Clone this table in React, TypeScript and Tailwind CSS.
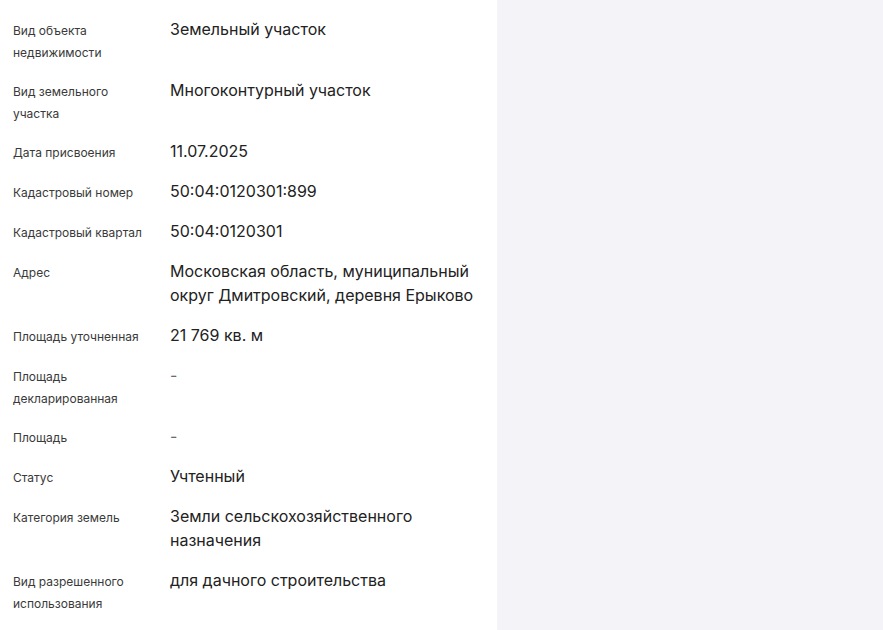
import React from "react";

type Row = { label: string; value: string; muted?: boolean };

const rows: Row[] = [
  { label: "Вид объекта недвижимости", value: "Земельный участок" },
  { label: "Вид земельного участка", value: "Многоконтурный участок" },
  { label: "Дата присвоения", value: "11.07.2025" },
  { label: "Кадастровый номер", value: "50:04:0120301:899" },
  { label: "Кадастровый квартал", value: "50:04:0120301" },
  {
    label: "Адрес",
    value: "Московская область, муниципальный округ Дмитровский, деревня Ерыково",
  },
  { label: "Площадь уточненная", value: "21 769 кв. м" },
  { label: "Площадь декларированная", value: "-", muted: true },
  { label: "Площадь", value: "-", muted: true },
  { label: "Статус", value: "Учтенный" },
  { label: "Категория земель", value: "Земли сельскохозяйственного назначения" },
  { label: "Вид разрешенного использования", value: "для дачного строительства" },
];

export default function App() {
  return (
    <div
      className="flex h-[630px] w-[883px] overflow-hidden bg-[#f4f3f8]"
      style={{ fontFamily: "Inter, 'Noto Sans', sans-serif" }}
    >
      <div className="flex w-[497px] shrink-0 flex-col gap-[16px] bg-white pl-[13px] pr-[20px] pt-[17px]">
        {rows.map((r) => (
          <div key={r.label} className="grid grid-cols-[157px_1fr] items-start">
            {/* label sits a touch lower than the value baseline */}
            <div className="-mb-[2px] w-[136px] pt-[3px] text-[12px] leading-[22px] text-[#3a3a3a]">
              {r.label}
            </div>
            <div
              className={`text-[16px] leading-[24px] ${
                r.muted ? "text-[#6b6b6b]" : "text-[#222222]"
              }`}
            >
              {r.value}
            </div>
          </div>
        ))}
      </div>
      <div className="flex-1" />
    </div>
  );
}
